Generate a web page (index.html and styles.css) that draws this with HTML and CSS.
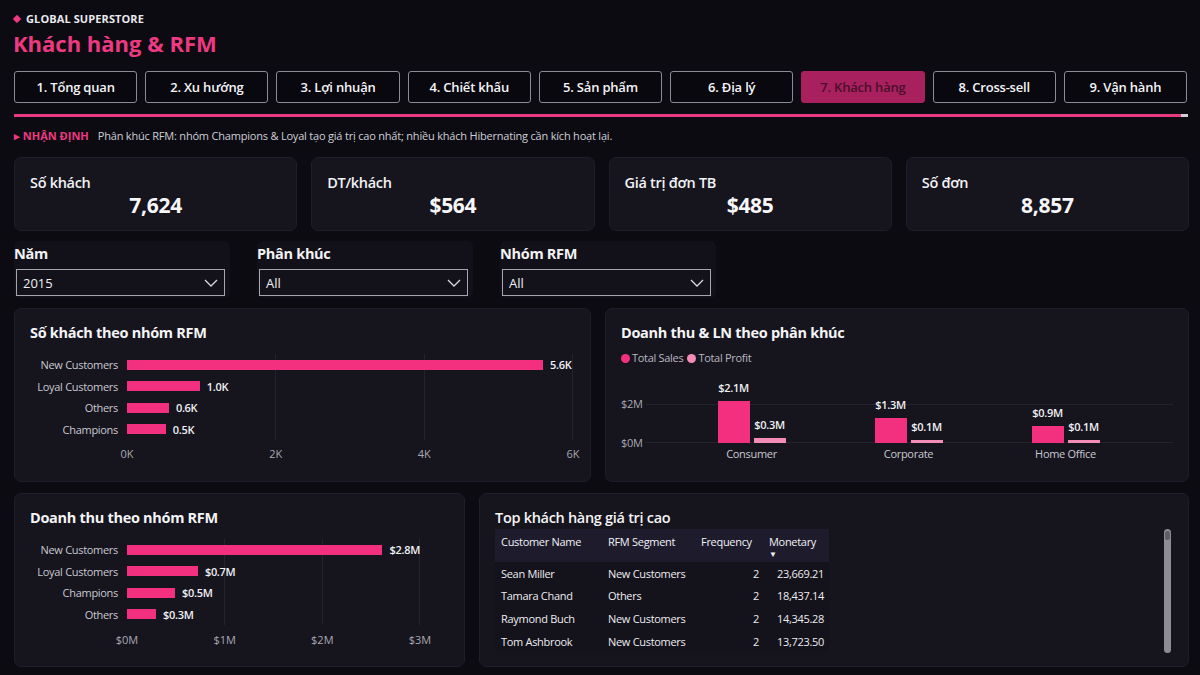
FILE: index.html
```html
<!DOCTYPE html>
<html lang="vi">
<head>
<meta charset="utf-8">
<title>Khách hàng &amp; RFM</title>
<link rel="stylesheet" href="styles.css">
</head>
<body>
<div class="page">
  <header class="head">
    <div class="brand"><span class="diamond"></span>GLOBAL SUPERSTORE</div>
    <h1 class="title">Khách hàng &amp; RFM</h1>
  </header>

  <nav class="tabs">
    <a class="tab">1. Tổng quan</a>
    <a class="tab">2. Xu hướng</a>
    <a class="tab">3. Lợi nhuận</a>
    <a class="tab">4. Chiết khấu</a>
    <a class="tab">5. Sản phẩm</a>
    <a class="tab">6. Địa lý</a>
    <a class="tab active">7. Khách hàng</a>
    <a class="tab">8. Cross-sell</a>
    <a class="tab">9. Vận hành</a>
  </nav>

  <div class="progress"><span class="progress-fill"></span><span class="progress-end"></span></div>

  <p class="insight"><span class="insight-tag">▸ NHẬN ĐỊNH</span>Phân khúc RFM: nhóm Champions &amp; Loyal tạo giá trị cao nhất; nhiều khách Hibernating cần kích hoạt lại.</p>

  <section class="kpis">
    <div class="kpi"><div class="kpi-label">Số khách</div><div class="kpi-value">7,624</div></div>
    <div class="kpi"><div class="kpi-label">DT/khách</div><div class="kpi-value">$564</div></div>
    <div class="kpi"><div class="kpi-label">Giá trị đơn TB</div><div class="kpi-value">$485</div></div>
    <div class="kpi"><div class="kpi-label">Số đơn</div><div class="kpi-value">8,857</div></div>
  </section>

  <section class="filters">
    <div class="slicer">
      <div class="slicer-label">Năm</div>
      <div class="dropdown"><span>2015</span>
        <svg class="chev" viewBox="0 0 14 8" width="14" height="8"><polyline points="1,1 7,7 13,1" fill="none" stroke="#d8d8de" stroke-width="1.3"/></svg>
      </div>
    </div>
    <div class="slicer">
      <div class="slicer-label">Phân khúc</div>
      <div class="dropdown"><span>All</span>
        <svg class="chev" viewBox="0 0 14 8" width="14" height="8"><polyline points="1,1 7,7 13,1" fill="none" stroke="#d8d8de" stroke-width="1.3"/></svg>
      </div>
    </div>
    <div class="slicer">
      <div class="slicer-label">Nhóm RFM</div>
      <div class="dropdown"><span>All</span>
        <svg class="chev" viewBox="0 0 14 8" width="14" height="8"><polyline points="1,1 7,7 13,1" fill="none" stroke="#d8d8de" stroke-width="1.3"/></svg>
      </div>
    </div>
  </section>

  <section class="row row-top">
    <div class="card">
      <h2 class="card-title">Số khách theo nhóm RFM</h2>
      <div class="hbar hbar-count">
        <div class="hrow"><span class="hlabel">New Customers</span><div class="hplot"><span class="bar" style="width:93.3%"></span><span class="val">5.6K</span></div></div>
        <div class="hrow"><span class="hlabel">Loyal Customers</span><div class="hplot"><span class="bar" style="width:16.3%"></span><span class="val">1.0K</span></div></div>
        <div class="hrow"><span class="hlabel">Others</span><div class="hplot"><span class="bar" style="width:9.4%"></span><span class="val">0.6K</span></div></div>
        <div class="hrow"><span class="hlabel">Champions</span><div class="hplot"><span class="bar" style="width:8.7%"></span><span class="val">0.5K</span></div></div>
        <div class="haxis"><span class="tick">0K</span><span class="tick">2K</span><span class="tick">4K</span><span class="tick">6K</span></div>
      </div>
    </div>

    <div class="card">
      <h2 class="card-title">Doanh thu &amp; LN theo phân khúc</h2>
      <div class="legend">
        <span class="lg"><i class="dot dot-sales"></i>Total Sales</span>
        <span class="lg"><i class="dot dot-profit"></i>Total Profit</span>
      </div>
      <div class="colchart">
        <div class="yaxis"><span>$2M</span><span>$0M</span></div>
        <div class="cplot">
          <div class="group">
            <div class="col"><span class="cval">$2.1M</span><span class="cbar sales" style="height:42px"></span></div>
            <div class="col"><span class="cval">$0.3M</span><span class="cbar profit" style="height:5px"></span></div>
          </div>
          <div class="group">
            <div class="col"><span class="cval">$1.3M</span><span class="cbar sales" style="height:25px"></span></div>
            <div class="col"><span class="cval">$0.1M</span><span class="cbar profit" style="height:3px"></span></div>
          </div>
          <div class="group">
            <div class="col"><span class="cval">$0.9M</span><span class="cbar sales" style="height:17px"></span></div>
            <div class="col"><span class="cval">$0.1M</span><span class="cbar profit" style="height:3px"></span></div>
          </div>
        </div>
        <div class="xcats"><span>Consumer</span><span>Corporate</span><span>Home Office</span></div>
      </div>
    </div>
  </section>

  <section class="row row-bottom">
    <div class="card">
      <h2 class="card-title">Doanh thu theo nhóm RFM</h2>
      <div class="hbar hbar-rev">
        <div class="hrow"><span class="hlabel">New Customers</span><div class="hplot"><span class="bar" style="width:93.2%"></span><span class="val">$2.8M</span></div></div>
        <div class="hrow"><span class="hlabel">Loyal Customers</span><div class="hplot"><span class="bar" style="width:24.2%"></span><span class="val">$0.7M</span></div></div>
        <div class="hrow"><span class="hlabel">Champions</span><div class="hplot"><span class="bar" style="width:16.4%"></span><span class="val">$0.5M</span></div></div>
        <div class="hrow"><span class="hlabel">Others</span><div class="hplot"><span class="bar" style="width:9.9%"></span><span class="val">$0.3M</span></div></div>
        <div class="haxis"><span class="tick">$0M</span><span class="tick">$1M</span><span class="tick">$2M</span><span class="tick">$3M</span></div>
      </div>
    </div>

    <div class="card card-table">
      <div class="table-wrap">
        <h2 class="card-title card-title-light">Top khách hàng giá trị cao</h2>
        <table class="tbl">
          <thead>
            <tr><th>Customer Name</th><th>RFM Segment</th><th>Frequency</th><th>Monetary<span class="sort">▼</span></th></tr>
          </thead>
          <tbody>
            <tr><td>Sean Miller</td><td>New Customers</td><td class="num">2</td><td class="num">23,669.21</td></tr>
            <tr><td>Tamara Chand</td><td>Others</td><td class="num">2</td><td class="num">18,437.14</td></tr>
            <tr><td>Raymond Buch</td><td>New Customers</td><td class="num">2</td><td class="num">14,345.28</td></tr>
            <tr><td>Tom Ashbrook</td><td>New Customers</td><td class="num">2</td><td class="num">13,723.50</td></tr>
          </tbody>
        </table>
      </div>
      <div class="scrollbar"><span class="thumb"></span></div>
    </div>
  </section>
</div>
</body>
</html>
```

FILE: styles.css
```css
* { box-sizing: border-box; }

html, body {
  margin: 0;
  background: #0c0b12;
  color: #ececf1;
  font-family: "Open Sans", "Noto Sans", sans-serif;
}

.page {
  width: 1200px;
  height: 675px;
  padding: 12px 11px 0 14px;
  overflow: hidden;
}

/* ---------- header ---------- */
.brand {
  display: flex;
  align-items: center;
  gap: 6px;
  font-size: 11px;
  line-height: 14px;
  font-weight: 700;
  color: #e9e9ee;
  letter-spacing: 0.1px;
}
.diamond {
  width: 6px;
  height: 6px;
  background: #f0387f;
  transform: rotate(45deg);
  border-radius: 1px;
}
.title {
  margin: 3px 0 0 -1px;
  font-size: 22px;
  line-height: 28px;
  font-weight: 700;
  color: #ec3a81;
  letter-spacing: 0;
}

/* ---------- navigation ---------- */
.tabs {
  margin-top: 14px;
  display: grid;
  grid-template-columns: repeat(9, 1fr);
  gap: 8px;
  width: 1173px;
}
.tab {
  height: 32px;
  display: flex;
  align-items: center;
  justify-content: center;
  border: 1.5px solid #8c8b95;
  border-radius: 3px;
  background: #09080e;
  color: #f4f4f7;
  font-size: 13px;
  font-weight: 600;
  letter-spacing: -0.2px;
}
.tab.active {
  background: #a8215e;
  border-color: #a8215e;
  color: #4a0f2c;
}

.progress {
  margin-top: 11px;
  display: flex;
  width: 1174px;
  height: 3px;
}
.progress-fill { flex: 1; background: #e83a80; }
.progress-end { width: 7px; background: #cfcfd6; }

.insight {
  margin: 11px 0 0;
  font-size: 11px;
  line-height: 16px;
  color: #cfcfd7;
  letter-spacing: -0.2px;
}
.insight-tag {
  color: #ec3a81;
  font-weight: 700;
  margin-right: 9px;
  letter-spacing: 0;
}

/* ---------- KPI cards ---------- */
.kpis {
  margin-top: 13px;
  display: grid;
  grid-template-columns: repeat(4, 1fr);
  gap: 14px;
  width: 1175px;
}
.kpi {
  height: 74px;
  padding: 16px 15px 0;
  background: #16141d;
  border: 1px solid #1f1d27;
  border-radius: 7px;
}
.kpi-label {
  font-size: 14.5px;
  line-height: 18px;
  font-weight: 600;
  color: #f2f2f5;
  letter-spacing: -0.3px;
}
.kpi-value {
  text-align: center;
  font-size: 21px;
  line-height: 26px;
  font-weight: 700;
  color: #f6f6f8;
  letter-spacing: -0.3px;
}

/* ---------- slicers ---------- */
.filters {
  margin-top: 10px;
  display: flex;
  gap: 27px;
}
.slicer {
  width: 216px;
  height: 57px;
  padding: 3px 5px 0 2px;
  background: #121119;
  border-radius: 6px;
}
.slicer-label {
  margin-left: -2px;
  font-size: 14.5px;
  line-height: 20px;
  font-weight: 700;
  color: #f2f2f5;
  letter-spacing: -0.3px;
}
.dropdown {
  margin-top: 5px;
  height: 27px;
  display: flex;
  align-items: center;
  justify-content: space-between;
  padding: 0 6px 0 6px;
  border: 1.5px solid #a7a6b0;
  background: #13121a;
  font-size: 13px;
  color: #efeff3;
}
.chev { display: block; }

/* ---------- cards ---------- */
.row {
  display: flex;
  gap: 14px;
  width: 1175px;
}
.row-top { margin-top: 10px; }
.row-bottom { margin-top: 11px; }
.row-top .card { flex: 1; }
.row-bottom .card:first-child { width: 451px; flex: none; }
.row-bottom .card:last-child { flex: 1; }

.card {
  height: 174px;
  padding: 14px 15px 0;
  background: #16141d;
  border: 1px solid #1f1d27;
  border-radius: 7px;
}
.card-title {
  margin: 0;
  font-size: 14.5px;
  line-height: 20px;
  font-weight: 700;
  color: #f4f4f7;
  letter-spacing: -0.3px;
}
.card-title-light { font-weight: 600; }

/* ---------- horizontal bar charts ---------- */
.hbar { margin-top: 11px; }
.hrow {
  display: grid;
  grid-template-columns: 88px 1fr;
  column-gap: 9px;
  height: 21.5px;
  align-items: center;
}
.hlabel {
  text-align: right;
  font-size: 11px;
  color: #c9c9d1;
  white-space: nowrap;
  letter-spacing: -0.3px;
}
.hplot {
  height: 100%;
  display: flex;
  align-items: center;
  gap: 7px;
  background:
    linear-gradient(#24222d, #24222d) calc(100% / 3) 0 / 1px 100% no-repeat,
    linear-gradient(#24222d, #24222d) calc(200% / 3) 0 / 1px 100% no-repeat,
    linear-gradient(#24222d, #24222d) 100% 0 / 1px 100% no-repeat;
}
.hbar-count .hplot { width: 446px; }
.hbar-rev .hplot { width: 293px; }
.bar {
  height: 10px;
  background: #f2307f;
}
.val {
  font-size: 11px;
  font-weight: 600;
  color: #f0f0f4;
  letter-spacing: -0.3px;
}
.haxis {
  margin: 7px 0 0 97px;
  display: flex;
  justify-content: space-between;
  font-size: 11px;
  line-height: 14px;
  color: #a9a9b3;
}
.hbar-count .haxis { width: 446px; }
.hbar-rev .haxis { width: 293px; margin-top: 8px; }
.tick {
  width: 0;
  display: flex;
  justify-content: center;
  white-space: nowrap;
}

/* ---------- column chart ---------- */
.legend {
  margin-top: 8px;
  display: flex;
  gap: 4px;
  font-size: 11px;
  line-height: 14px;
  color: #b9b9c2;
  letter-spacing: -0.3px;
}
.lg { display: flex; align-items: center; gap: 2px; }
.dot {
  width: 9px;
  height: 9px;
  border-radius: 50%;
  display: inline-block;
}
.dot-sales { background: #f2307f; }
.dot-profit { background: #f48cb8; }

.colchart {
  display: grid;
  grid-template-columns: 25px 527px;
}
.yaxis {
  height: 78px;
  display: flex;
  flex-direction: column;
  padding-top: 32px;
  gap: 25px;
  font-size: 11px;
  line-height: 14px;
  color: #a9a9b3;
  letter-spacing: -0.3px;
}
.cplot {
  height: 78px;
  display: flex;
  align-items: flex-end;
  padding: 0 29px 0 27px;
  background:
    linear-gradient(#24222d, #24222d) 0 39px / 100% 1px no-repeat,
    linear-gradient(#24222d, #24222d) 0 77px / 100% 1px no-repeat;
}
.group {
  flex: 1;
  display: flex;
  justify-content: center;
  align-items: flex-end;
  gap: 4px;
}
.col {
  width: 32px;
  display: flex;
  flex-direction: column;
  align-items: center;
}
.cval {
  font-size: 11px;
  line-height: 14px;
  font-weight: 600;
  color: #f0f0f4;
  white-space: nowrap;
  margin-bottom: 6px;
  letter-spacing: -0.3px;
}
.cbar { width: 32px; display: block; }
.cbar.sales { background: #f2307f; }
.cbar.profit { background: #f48cb8; }
.xcats {
  grid-column: 2;
  margin-top: 4px;
  display: flex;
  padding: 0 29px 0 27px;
  font-size: 11px;
  line-height: 14px;
  color: #c9c9d1;
  letter-spacing: -0.3px;
}
.xcats span { flex: 1; text-align: center; }

/* ---------- table ---------- */
.card-table {
  display: flex;
  justify-content: space-between;
}
.tbl {
  margin-top: 1px;
  border-collapse: collapse;
  width: 334px;
  font-size: 11px;
  color: #ededf1;
  letter-spacing: -0.3px;
}
.tbl th {
  height: 33px;
  padding: 6px 6px 0;
  vertical-align: top;
  text-align: left;
  font-weight: 400;
  line-height: 14px;
  background: #1e1b2c;
  color: #f2f2f5;
  white-space: nowrap;
}
.tbl th:nth-child(1) { width: 107px; }
.tbl th:nth-child(2) { width: 93px; }
.tbl th:nth-child(3) { width: 68px; }
.tbl th:nth-child(4) { width: 66px; }
.sort {
  display: block;
  font-size: 8px;
  line-height: 9px;
  color: #f2f2f5;
}
.tbl td {
  height: 22.6px;
  padding: 0 6px;
  white-space: nowrap;
  background: #14121a;
}
.tbl td.num { text-align: right; padding-right: 4px; }
.tbl td:last-child { padding-right: 5px; }

.scrollbar {
  width: 7px;
  height: 124px;
  margin: 21px 2px 0 0;
  border-radius: 4px;
  background: #8d8c95;
}
.thumb {
  display: block;
  width: 5px;
  height: 9px;
  margin: 2px auto 0;
  border-radius: 3px;
  background: #5f5e68;
}
```
